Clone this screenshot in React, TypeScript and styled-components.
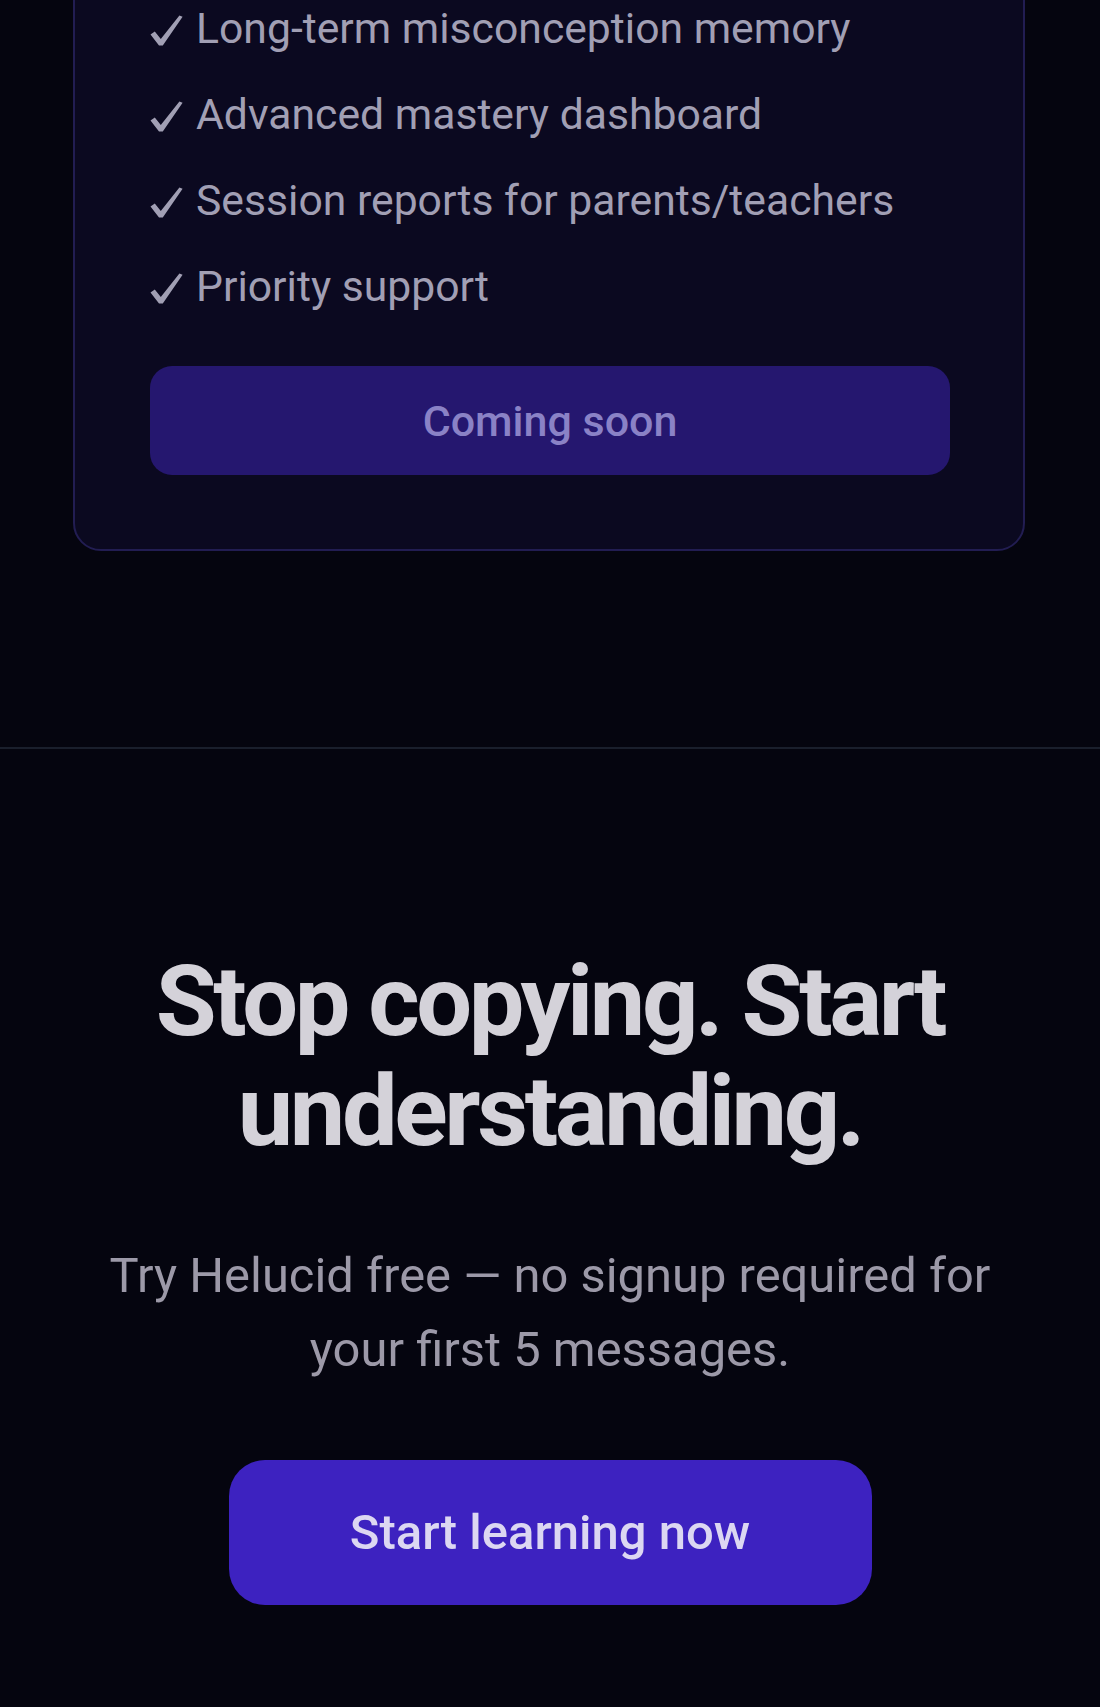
import React from 'react';
import { styled, createGlobalStyle } from 'styled-components';

const GlobalStyle = createGlobalStyle`
  html, body {
    margin: 0;
    padding: 0;
    background: #05050f;
  }
  body {
    font-family: Roboto, "DejaVu Sans", sans-serif;
    overflow: hidden;
  }
`;

const features = [
  'Long-term misconception memory',
  'Advanced mastery dashboard',
  'Session reports for parents/teachers',
  'Priority support',
];

const Page = styled.div`
  width: 1100px;
  min-height: 1707px;
  background: #05050f;
  color: #d6d4dc;
`;

const PricingSection = styled.section`
  padding: 0 75px 196px 73px;
`;

const PlanCard = styled.div`
  margin-top: -61px;
  padding: 54px 73px 74px 75px;
  background: #0b0920;
  border: 2px solid #221d52;
  border-radius: 28px;
`;

const FeatureList = styled.ul`
  list-style: none;
  margin: 0;
  padding: 0;
  display: flex;
  flex-direction: column;
  gap: 20px;
`;

const FeatureItem = styled.li`
  display: flex;
  align-items: center;
  font-size: 42.7px;
  line-height: 66px;
  color: #a19fb4;
  white-space: nowrap;
`;

const CheckMark = styled.svg`
  width: 33px;
  height: 31px;
  margin: 4px 13px 0 0;
  flex-shrink: 0;
  fill: #a19fb4;
`;

const ComingSoonButton = styled.button`
  display: block;
  width: 100%;
  height: 109px;
  margin-top: 47px;
  border: none;
  border-radius: 22px;
  background: #25176f;
  color: #8a82c6;
  font-family: Roboto, sans-serif;
  font-size: 43px;
  font-weight: 500;
  cursor: default;
`;

const CtaSection = styled.section`
  border-top: 2px solid #1a1f2c;
  padding: 197px 66px 100px;
  display: flex;
  flex-direction: column;
  align-items: center;
  text-align: center;
`;

const Headline = styled.h2`
  margin: 0;
  font-size: 99px;
  line-height: 110px;
  font-weight: 700;
  letter-spacing: -3.4px;
  color: #d4d2d9;
`;

const Lead = styled.p`
  margin: 73px 0 0;
  font-size: 48.9px;
  line-height: 74px;
  color: #9c99a8;
`;

const StartButton = styled.button`
  margin-top: 73px;
  width: 643px;
  height: 145px;
  border: none;
  border-radius: 36px;
  background: #3d22c0;
  color: #dcd7f2;
  font-family: Roboto, sans-serif;
  font-size: 49px;
  font-weight: 500;
  cursor: pointer;
`;

const Check = () => (
  <CheckMark viewBox="0 0 33 31" aria-hidden="true">
    <path d="M0.5 19.5 L4.8 16.6 L10.8 24 L29.4 0.4 L32.6 1.8 L12.8 30.6 L9 30.6 Z" />
  </CheckMark>
);

export default function App() {
  return (
    <Page>
      <GlobalStyle />
      <PricingSection>
        <PlanCard>
          <FeatureList>
            {features.map((f) => (
              <FeatureItem key={f}>
                <Check />
                {f}
              </FeatureItem>
            ))}
          </FeatureList>
          <ComingSoonButton>Coming soon</ComingSoonButton>
        </PlanCard>
      </PricingSection>
      <CtaSection>
        <Headline>
          Stop copying. Start
          <br />
          understanding.
        </Headline>
        <Lead>
          Try Helucid free — no signup required for your first 5 messages.
        </Lead>
        <StartButton>Start learning now</StartButton>
      </CtaSection>
    </Page>
  );
}
